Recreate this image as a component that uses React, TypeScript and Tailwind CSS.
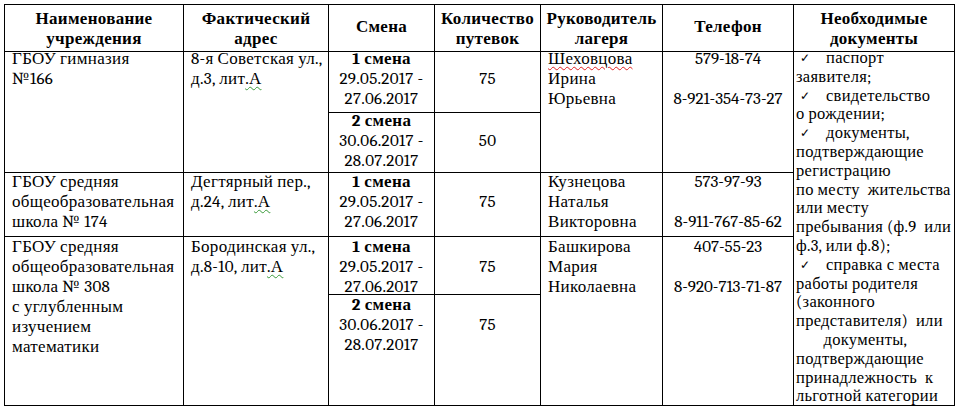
import React from "react";

const Check = () => (
  <span className="inline-block w-[30px] pl-[4px] font-sans text-[12px] leading-[18px] align-top tracking-normal">✓</span>
);

const Wavy = ({ children, color }: { children: React.ReactNode; color: string }) => (
  <span
    className="underline decoration-wavy decoration-1 underline-offset-[2px]"
    style={{ textDecorationColor: color }}
  >
    {children}
  </span>
);

const L = ({ children, className = "" }: { children?: React.ReactNode; className?: string }) => (
  <div className={"whitespace-pre " + className}>{children ?? "\u00a0"}</div>
);

export default function App() {
  const cell = "bg-white";
  const head2 = "bg-white font-bold text-center leading-[20px] pt-[4px]";
  const head1 = "bg-white font-bold text-center leading-[20px] pt-[12px]";
  return (
    <div className="w-[960px] h-[411px] bg-white pt-[4px] pl-[4px] font-serif text-[17px] tracking-[0.3px] leading-[20px] text-black overflow-hidden">
      <div className="grid grid-cols-[178px_144px_105px_105px_121px_130px_160px] grid-rows-[46px_60px_59px_63px_57px_110px] gap-px bg-black p-px w-[951px]">
        {/* header */}
        <div className={head2 + " col-start-1 row-start-1"}>
          <L>Наименование</L>
          <L>учреждения</L>
        </div>
        <div className={head2 + " col-start-2 row-start-1"}>
          <L>Фактический</L>
          <L>адрес</L>
        </div>
        <div className={head1 + " col-start-3 row-start-1"}>
          <L>Смена</L>
        </div>
        <div className={head2 + " col-start-4 row-start-1"}>
          <L>Количество</L>
          <L>путевок</L>
        </div>
        <div className={head2 + " col-start-5 row-start-1"}>
          <L>Руководитель</L>
          <L>лагеря</L>
        </div>
        <div className={head1 + " col-start-6 row-start-1"}>
          <L>Телефон</L>
        </div>
        <div className={head2 + " col-start-7 row-start-1"}>
          <L>Необходимые</L>
          <L>документы</L>
        </div>

        {/* row 1 */}
        <div className={cell + " col-start-1 row-start-2 row-span-2"}>
          <div className="px-[7px] -mt-[3px]">
            <L>ГБОУ гимназия</L>
            <L>№166</L>
          </div>
        </div>
        <div className={cell + " col-start-2 row-start-2 row-span-2"}>
          <div className="px-[7px] -mt-[3px]">
            <L>8-я Советская ул.,</L>
            <L>
              д.3, лит<Wavy color="#3a9a3a">.А</Wavy>
            </L>
          </div>
        </div>
        <div className={cell + " col-start-3 row-start-2 text-center"}>
          <div className="-mt-[3px]">
            <L className="font-bold">1 смена</L>
            <L>29.05.2017 -</L>
            <L>27.06.2017</L>
          </div>
        </div>
        <div className={cell + " col-start-4 row-start-2 text-center"}>
          <div className="-mt-[3px]">
            <L />
            <L>75</L>
          </div>
        </div>
        <div className={cell + " col-start-5 row-start-2 row-span-2"}>
          <div className="px-[7px] -mt-[3px]">
            <L>
              <Wavy color="#e02020">Шеховцова</Wavy>
            </L>
            <L>Ирина</L>
            <L>Юрьевна</L>
          </div>
        </div>
        <div className={cell + " col-start-6 row-start-2 row-span-2 text-center tracking-normal"}>
          <div className="-mt-[3px]">
            <L>579-18-74</L>
            <L />
            <L>8-921-354-73-27</L>
          </div>
        </div>
        <div className={cell + " col-start-7 row-start-2 row-span-5"}>
          <div className="pl-[2px] leading-[18.8px] -mt-[3px] text-[16.5px]">
            <L><Check />паспорт</L>
            <L>заявителя;</L>
            <L><Check />свидетельство</L>
            <L>о рождении;</L>
            <L><Check />документы,</L>
            <L>подтверждающие</L>
            <L>регистрацию</L>
            <L>по месту  жительства</L>
            <L>или месту</L>
            <L>пребывания (ф.9  или</L>
            <L>ф.3, или ф.8);</L>
            <L><Check />справка с места</L>
            <L>работы родителя</L>
            <L>(законного</L>
            <L>представителя)  или</L>
            <L>{"       "}документы,</L>
            <L>подтверждающие</L>
            <L>принадлежность  к</L>
            <L>льготной категории</L>
          </div>
        </div>
        <div className={cell + " col-start-3 row-start-3 text-center"}>
          <div className="-mt-[2px]">
            <L className="font-bold">2 смена</L>
            <L>30.06.2017 -</L>
            <L>28.07.2017</L>
          </div>
        </div>
        <div className={cell + " col-start-4 row-start-3 text-center"}>
          <div className="-mt-[2px]">
            <L />
            <L>50</L>
          </div>
        </div>

        {/* row 2 */}
        <div className={cell + " col-start-1 row-start-4"}>
          <div className="px-[7px] -mt-[1px]">
            <L>ГБОУ средняя</L>
            <L>общеобразовательная</L>
            <L>школа № 174</L>
          </div>
        </div>
        <div className={cell + " col-start-2 row-start-4"}>
          <div className="px-[7px] -mt-[1px]">
            <L>Дегтярный пер.,</L>
            <L>
              д.24, лит<Wavy color="#3a9a3a">.А</Wavy>
            </L>
          </div>
        </div>
        <div className={cell + " col-start-3 row-start-4 text-center"}>
          <div className="-mt-[1px]">
            <L className="font-bold">1 смена</L>
            <L>29.05.2017 -</L>
            <L>27.06.2017</L>
          </div>
        </div>
        <div className={cell + " col-start-4 row-start-4 text-center"}>
          <div className="-mt-[1px]">
            <L />
            <L>75</L>
          </div>
        </div>
        <div className={cell + " col-start-5 row-start-4"}>
          <div className="px-[7px] -mt-[1px]">
            <L>Кузнецова</L>
            <L>Наталья</L>
            <L>Викторовна</L>
          </div>
        </div>
        <div className={cell + " col-start-6 row-start-4 text-center tracking-normal"}>
          <div className="-mt-[1px]">
            <L>573-97-93</L>
            <L />
            <L>8-911-767-85-62</L>
          </div>
        </div>

        {/* row 3 */}
        <div className={cell + " col-start-1 row-start-5 row-span-2"}>
          <div className="px-[7px]">
            <L>ГБОУ средняя</L>
            <L>общеобразовательная</L>
            <L>школа № 308</L>
            <L>с углубленным</L>
            <L>изучением</L>
            <L>математики</L>
          </div>
        </div>
        <div className={cell + " col-start-2 row-start-5 row-span-2"}>
          <div className="px-[7px]">
            <L>Бородинская ул.,</L>
            <L>
              д.8-10, лит<Wavy color="#3a9a3a">.А</Wavy>
            </L>
          </div>
        </div>
        <div className={cell + " col-start-3 row-start-5 text-center"}>
          <div>
            <L className="font-bold">1 смена</L>
            <L>29.05.2017 -</L>
            <L>27.06.2017</L>
          </div>
        </div>
        <div className={cell + " col-start-4 row-start-5 text-center"}>
          <div>
            <L />
            <L>75</L>
          </div>
        </div>
        <div className={cell + " col-start-5 row-start-5 row-span-2"}>
          <div className="px-[7px]">
            <L>Башкирова</L>
            <L>Мария</L>
            <L>Николаевна</L>
          </div>
        </div>
        <div className={cell + " col-start-6 row-start-5 row-span-2 text-center tracking-normal"}>
          <div>
            <L>407-55-23</L>
            <L />
            <L>8-920-713-71-87</L>
          </div>
        </div>
        <div className={cell + " col-start-3 row-start-6 text-center"}>
          <div>
            <L className="font-bold">2 смена</L>
            <L>30.06.2017 -</L>
            <L>28.07.2017</L>
          </div>
        </div>
        <div className={cell + " col-start-4 row-start-6 text-center"}>
          <div>
            <L />
            <L>75</L>
          </div>
        </div>
      </div>
    </div>
  );
}
